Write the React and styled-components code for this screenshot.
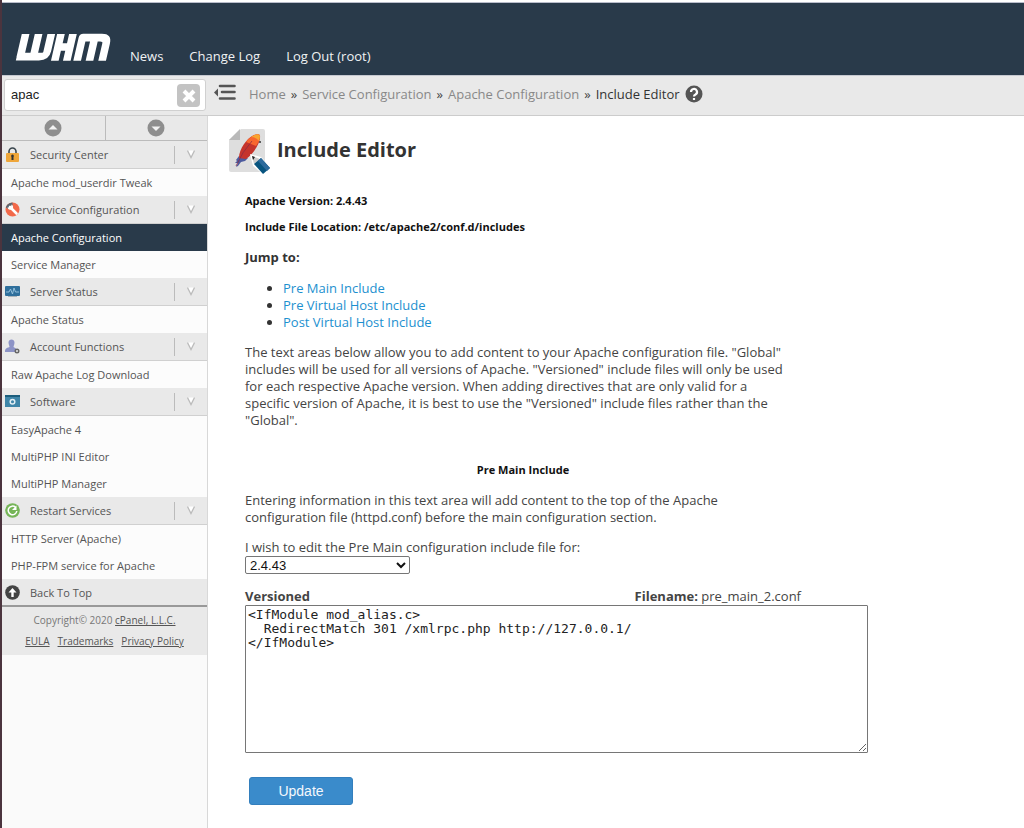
import React from "react";
import styled, { createGlobalStyle } from "styled-components";

const Global = createGlobalStyle`
  *, *::before, *::after { box-sizing: border-box; }
  body {
    margin: 0;
    background: #fff;
    color: #333;
    font-family: "Open Sans", "Noto Sans", sans-serif;
    font-size: 13px;
    line-height: 17px;
  }
`;

const Shell = styled.div`
  display: flex;
  flex-direction: column;
  min-height: 100vh;
  border-left: 2px solid #4b343e;
`;

const Header = styled.header`
  display: flex;
  align-items: flex-end;
  height: 75px;
  padding: 0 10px 9px;
  border-top: 2px solid #fff;
  background: #293a4a;
  box-shadow: inset 0 1px 0 #b9bdcb;
`;

const TopNav = styled.nav`
  display: flex;
  gap: 26px;
  margin-left: 14px;
`;

const TopLink = styled.a`
  color: #f0f2f4;
  text-decoration: none;
  line-height: 20px;
`;

const Toolbar = styled.div`
  display: flex;
  align-items: flex-start;
  height: 41px;
  background: #e9e9e9;
  border-top: 1px solid #c5c8d0;
  border-bottom: 1px solid #ccc;
`;

const SearchBox = styled.form`
  display: flex;
  align-items: center;
  flex: none;
  width: 202px;
  height: 32px;
  margin: 3px 8px 0 2px;
  padding: 0 5px 0 6px;
  background: #fff;
  border: 1px solid #d0d0d0;
  border-radius: 3px;
`;

const SearchInput = styled.input`
  flex: 1;
  min-width: 0;
  padding: 0;
  border: 0;
  outline: 0;
  color: #222;
  background: transparent;
  font: 13px/20px "Liberation Sans", Arial, sans-serif;
`;

const IconButton = styled.button`
  display: flex;
  padding: 0;
  border: 0;
  background: none;
  cursor: pointer;
`;

const MenuToggle = styled(IconButton)`
  margin: 8px 13px 0 0;
`;

const Crumbs = styled.nav`
  display: flex;
  align-items: center;
  gap: 5px;
  height: 24px;
  margin-top: 6px;
  white-space: nowrap;
`;

const Crumb = styled.a`
  color: #888;
  text-decoration: none;
`;

const CrumbMark = styled.span`
  color: #444;
`;

const Body = styled.div`
  display: flex;
  flex: 1;
`;

const Sidebar = styled.aside`
  flex: none;
  width: 206px;
  background: #fafafa;
  border-right: 1px solid #d8d8d8;
  font-size: 11px;
`;

const Pager = styled.div`
  display: grid;
  grid-template-columns: 1fr 1fr;
  height: 25px;
  border-bottom: 1px solid #bbb;
  background: #e9e9e9;
`;

const PagerButton = styled(IconButton)`
  align-items: center;
  justify-content: center;
  & + & { border-left: 1px solid #bbb; }
`;

const Section = styled.div`
  display: flex;
  align-items: center;
  height: 28px;
  padding: 0 12px 0 3px;
  background: #e9e9e9;
  border-bottom: ${(p) => (p.$last ? "2px solid #999" : "1px solid #d0d0d0")};
  color: #555;
`;

const SectionLink = styled.a`
  display: flex;
  flex: 1;
  align-items: center;
  gap: 10px;
  color: inherit;
  text-decoration: none;
  svg { flex: none; }
`;

const Collapse = styled(IconButton)`
  align-items: center;
  height: 18px;
  padding-left: 12px;
  border-left: 1px solid #bbb;
`;

const Item = styled.a`
  display: block;
  padding-left: 9px;
  background: ${(p) => (p.$active ? "#293a4a" : "#fcfcfc")};
  color: ${(p) => (p.$active ? "#fff" : "#555")};
  line-height: 27px;
  text-decoration: none;
`;

const Legal = styled.footer`
  padding: 3px 0;
  background: #e9e9e9;
  color: #777;
  font-size: 10px;
  line-height: 21px;
  text-align: center;
  a { color: #555; }
`;

const LegalLinks = styled.div`
  display: flex;
  justify-content: center;
  gap: 8px;
`;

const Main = styled.main`
  flex: 1;
  min-width: 0;
  padding: 12px 20px 24px 21px;
`;

const TitleRow = styled.div`
  display: flex;
  gap: 6px;
`;

const Title = styled.h1`
  margin: 8px 0 0;
  font-size: 20px;
  line-height: 28px;
`;

const Content = styled.div`
  max-width: 639px;
  padding: 17px 0 0 16px;
`;

const Fact = styled.h2`
  margin: 0 0 9px;
  color: #111;
  font-size: 11px;
  line-height: 17px;
`;

const Jump = styled.h3`
  margin: 14px 0;
  font-size: 13px;
  line-height: 17px;
`;

const JumpList = styled.ul`
  margin: 0 0 13px;
  padding-left: 38px;
  a { color: #1c90cf; text-decoration: none; }
`;

const Para = styled.p`
  max-width: 545px;
  margin: 0 0 13px;
  color: #444;
`;

const IncludeTitle = styled.h2`
  max-width: 556px;
  margin: 32px 0 14px;
  color: #111;
  font-size: 11px;
  line-height: 17px;
  text-align: center;
`;

const Field = styled.div`
  display: flex;
  flex-direction: column;
  align-items: flex-start;
  color: #444;
`;

const Version = styled.select`
  width: 165px;
  height: 18px;
  padding: 0;
  border: 1px solid #767676;
  border-radius: 2px;
  background: #fff;
  color: #111;
  font: 13px/16px "Liberation Sans", Arial, sans-serif;
`;

const EditorHead = styled.div`
  display: flex;
  justify-content: space-between;
  max-width: 556px;
  margin-top: 14px;
  color: #444;
`;

const Editor = styled.textarea`
  display: block;
  width: 100%;
  height: 148px;
  padding: 2px;
  border: 1px solid #767676;
  border-radius: 1px;
  outline: 0;
  background: #fff;
  color: #222;
  font: 13px/14px "DejaVu Sans Mono", monospace;
`;

const Submit = styled.button`
  width: 104px;
  height: 28px;
  margin: 24px 0 0 4px;
  border: 1px solid #337fbd;
  border-radius: 3px;
  background: #3a8bcb;
  color: #f4f8fc;
  font: 14px/20px "Liberation Sans", Arial, sans-serif;
`;

const Logo = () => (
  <svg width="104" height="38" viewBox="0 0 312 114" role="img" aria-label="WHM">
    <g transform="translate(23 0) skewX(-13)" fill="none" stroke="#fff" strokeWidth="23" strokeLinejoin="round">
      <path d="M22 18V87M61 18V87M11 86H80Q99 86 99 70V18" />
      <path d="M128 18V98M164 18V98M128 57H164" />
      <path d="M195 98V29H251Q270 29 270 47V98M232 28V98" />
    </g>
  </svg>
);

const icons = {
  lock: (
    <>
      <path d="M4 7V4.500a3.500 3.500 0 0 1 7 0V7" fill="none" stroke="#39454d" strokeWidth="1.600" />
      <rect x="1" y="6" width="13" height="9" rx="1" fill="#efa63a" />
      <path d="M7.500 7.500a1.500 1.500 0 0 1 1 2.500V13H6.500V10A1.500 1.500 0 0 1 7.500 7.500" fill="#333" />
    </>
  ),
  wrench: (
    <>
      <circle cx="7.500" cy="7.500" r="7" fill="#f2694a" />
      <path d="M2 3A7 7 0 0 1 7.500 .5v4L4.500 7.500 .8 5.500z" fill="#5a6670" />
      <path d="M5 5L11.500 11.500" stroke="#fff" strokeWidth="2.600" strokeLinecap="round" />
      <path d="M2.500 5.500A3 3 0 0 0 7.500 7 3 3 0 0 0 6.500 2.500L6 5z" fill="#fff" />
    </>
  ),
  monitor: (
    <>
      <rect x="0" y="2" width="15" height="10" rx="1" fill="#2f6f9c" />
      <path d="M1 8h3l1.500-3 2 5L9 4l1.500 4H14" fill="none" stroke="#9dc7e2" strokeWidth="0.900" />
      <path d="M3 12h9v1H3z" fill="#aab4bb" />
    </>
  ),
  user: (
    <>
      <path d="M3.500 3.500C3.500-.5 9.500-.5 9.500 3.500c0 2-.8 3-1 4.500L11 9.500V13H0c0-3 1-4 4.500-5 0-1.500-1-2.500-1-4.500" fill="#8d93c6" />
      <circle cx="12" cy="12" r="1.800" fill="#ddd" stroke="#666" strokeWidth="1.400" />
    </>
  ),
  software: (
    <>
      <rect x="0" y="1" width="15" height="12" fill="#3f85a8" />
      <rect x="0" y="1" width="15" height="2" fill="#1b5d7c" />
      <circle cx="7.500" cy="7.800" r="2.300" fill="none" stroke="#e2eef4" strokeWidth="1.500" />
    </>
  ),
  restart: (
    <>
      <circle cx="7.500" cy="7.500" r="7.300" fill="#76b558" />
      <path d="M10.500 4.300A4.300 4.300 0 1 0 11.800 8" fill="none" stroke="#fff" strokeWidth="1.500" />
      <path d="M11.500 2.500v4.500H7z" fill="#fff" />
    </>
  ),
  up: (
    <>
      <circle cx="7.500" cy="7.500" r="7.300" fill="#444" />
      <path d="M7.500 3L11.500 7.500H8.700V12H6.300V7.500H3.500z" fill="#fff" />
    </>
  ),
};

const SectionIcon = ({ name }) => (
  <svg width="15" height="15" viewBox="0 0 15 15" aria-hidden="true">{icons[name]}</svg>
);

const PagerIcon = ({ down }) => (
  <svg width="18" height="18" viewBox="0 0 18 18" aria-hidden="true">
    <circle cx="9" cy="9" r="8.500" fill="#8e8e8e" />
    <path d={down ? "M4.500 7.500h9L9 12z" : "M4.500 10.500h9L9 6z"} fill="#f2f2f2" />
  </svg>
);

const FeatherIcon = () => (
  <svg width="42" height="47" viewBox="0 0 42 47" aria-hidden="true">
    <path d="M12 1H34Q36 1 36 3V42Q36 44 34 44H2Q0 44 0 42V12z" fill="#dedede" />
    <path d="M0 12L11 1V12z" fill="#b9b9b9" />
    <path d="M10 28L7 32 8 33 6 35 9 35 7 39 9 38 12 34 16 33 19 30z" fill="#4d5b9e" />
    <path d="M10 30C10 21 18 10 25 7Q31 5 31 8C32 14 24 27 17 31z" fill="#c5342c" />
    <path d="M17 14C20 10 23 8 25 7Q31 5 31 8C31 12 29 15 27 18z" fill="#f8672f" />
    <path d="M22 9Q30 4 31 8 31 10 30 13Q27 9 22 9z" fill="#f8a530" />
    <path d="M7 38Q13 24 23 13" fill="none" stroke="#8a2b45" strokeWidth="0.800" />
    <path d="M30 14h2" stroke="#333" strokeWidth="1.500" />
    <path d="M21 26L32 29 42 40 35 47 24 38z" fill="#fff" />
    <path d="M23 28L31 31 25 36z" fill="#ccc" />
    <path d="M23 28l3 1-2 3z" fill="#222" />
    <path d="M25 36L32 30 41 40 34 46z" fill="#07547f" />
    <path d="M29 33L32 30 41 40 38 43z" fill="#2c6a9c" />
  </svg>
);

const sections = [
  { title: "Security Center", icon: "lock", items: ["Apache mod_userdir Tweak"] },
  { title: "Service Configuration", icon: "wrench", items: ["Apache Configuration", "Service Manager"] },
  { title: "Server Status", icon: "monitor", items: ["Apache Status"] },
  { title: "Account Functions", icon: "user", items: ["Raw Apache Log Download"] },
  { title: "Software", icon: "software", items: ["EasyApache 4", "MultiPHP INI Editor", "MultiPHP Manager"] },
  { title: "Restart Services", icon: "restart", items: ["HTTP Server (Apache)", "PHP-FPM service for Apache"] },
];

const code = `<IfModule mod_alias.c>
  RedirectMatch 301 /xmlrpc.php http://127.0.0.1/
</IfModule>`;

export default function App() {
  return (
    <>
      <Global />
      <Shell>
        <Header>
          <Logo />
          <TopNav>
            <TopLink href="#news">News</TopLink>
            <TopLink href="#changes">Change Log</TopLink>
            <TopLink href="#logout">Log Out (root)</TopLink>
          </TopNav>
        </Header>
        <Toolbar>
          <SearchBox>
            <SearchInput aria-label="Search" defaultValue="apac" />
            <IconButton type="reset" aria-label="Clear search">
              <svg width="23" height="23" viewBox="0 0 23 23">
                <rect width="23" height="23" rx="4" fill="#c3c3c3" />
                <path d="M7 7l10 10M17 7l-10 10" stroke="#fff" strokeWidth="4" />
              </svg>
            </IconButton>
          </SearchBox>
          <MenuToggle type="button" aria-label="Toggle menu">
            <svg width="22" height="17" viewBox="0 0 22 17">
              <path d="M6 2H20.500M8 8H20.500M6 14.500H20.500" stroke="#555" strokeWidth="2.600" strokeLinecap="round" />
              <path d="M0 8.500L4 4.500V12.500z" fill="#555" />
            </svg>
          </MenuToggle>
          <Crumbs aria-label="Breadcrumb">
            <Crumb href="#home">Home</Crumb>
            <CrumbMark>»</CrumbMark>
            <Crumb href="#service">Service Configuration</Crumb>
            <CrumbMark>»</CrumbMark>
            <Crumb href="#apache">Apache Configuration</Crumb>
            <CrumbMark>»</CrumbMark>
            <span>Include Editor</span>
            <IconButton type="button" aria-label="Help">
              <svg width="18" height="18" viewBox="0 0 18 18">
                <circle cx="9" cy="9" r="8.500" fill="#555" />
                <path d="M6 7a3 3 0 1 1 4.500 2.500Q9 10.300 9 11.500M9 13v2" fill="none" stroke="#fff" strokeWidth="2.200" />
              </svg>
            </IconButton>
          </Crumbs>
        </Toolbar>
        <Body>
          <Sidebar>
            <Pager>
              <PagerButton type="button" aria-label="Collapse all"><PagerIcon /></PagerButton>
              <PagerButton type="button" aria-label="Expand all"><PagerIcon down /></PagerButton>
            </Pager>
            <nav>
              {sections.map((s) => (
                <React.Fragment key={s.title}>
                  <Section>
                    <SectionLink href="#section"><SectionIcon name={s.icon} />{s.title}</SectionLink>
                    <Collapse type="button" aria-label={`Collapse ${s.title}`}>
                      <svg width="8" height="9" viewBox="0 0 8 9">
                        <path d="M.5 .5L4 7.500L7.500 .5" fill="#fff" stroke="#bbb" strokeWidth="1.300" />
                      </svg>
                    </Collapse>
                  </Section>
                  {s.items.map((i) => (
                    <Item key={i} href="#item" $active={i === "Apache Configuration"}>{i}</Item>
                  ))}
                </React.Fragment>
              ))}
              <Section $last>
                <SectionLink href="#top"><SectionIcon name="up" />Back To Top</SectionLink>
              </Section>
            </nav>
            <Legal>
              <div>Copyright© 2020 <a href="#cpanel">cPanel, L.L.C.</a></div>
              <LegalLinks>
                <a href="#eula">EULA</a>
                <a href="#trademarks">Trademarks</a>
                <a href="#privacy">Privacy Policy</a>
              </LegalLinks>
            </Legal>
          </Sidebar>
          <Main>
            <TitleRow>
              <FeatherIcon />
              <Title>Include Editor</Title>
            </TitleRow>
            <Content>
              <Fact>Apache Version: 2.4.43</Fact>
              <Fact>Include File Location: /etc/apache2/conf.d/includes</Fact>
              <Jump>Jump to:</Jump>
              <JumpList>
                <li><a href="#pre-main">Pre Main Include</a></li>
                <li><a href="#pre-virtual">Pre Virtual Host Include</a></li>
                <li><a href="#post-virtual">Post Virtual Host Include</a></li>
              </JumpList>
              <Para>
                The text areas below allow you to add content to your Apache configuration file. "Global"
                includes will be used for all versions of Apache. "Versioned" include files will only be used
                for each respective Apache version. When adding directives that are only valid for a
                specific version of Apache, it is best to use the "Versioned" include files rather than the
                "Global".
              </Para>
              <IncludeTitle id="pre-main">Pre Main Include</IncludeTitle>
              <Para>
                Entering information in this text area will add content to the top of the Apache
                configuration file (httpd.conf) before the main configuration section.
              </Para>
              <Field>
                <label htmlFor="version">I wish to edit the Pre Main configuration include file for:</label>
                <Version id="version"><option>2.4.43</option></Version>
              </Field>
              <EditorHead>
                <label htmlFor="editor"><b>Versioned</b></label>
                <span><b>Filename:</b> pre_main_2.conf</span>
              </EditorHead>
              <Editor id="editor" spellCheck={false} defaultValue={code} />
              <Submit type="button">Update</Submit>
            </Content>
          </Main>
        </Body>
      </Shell>
    </>
  );
}
